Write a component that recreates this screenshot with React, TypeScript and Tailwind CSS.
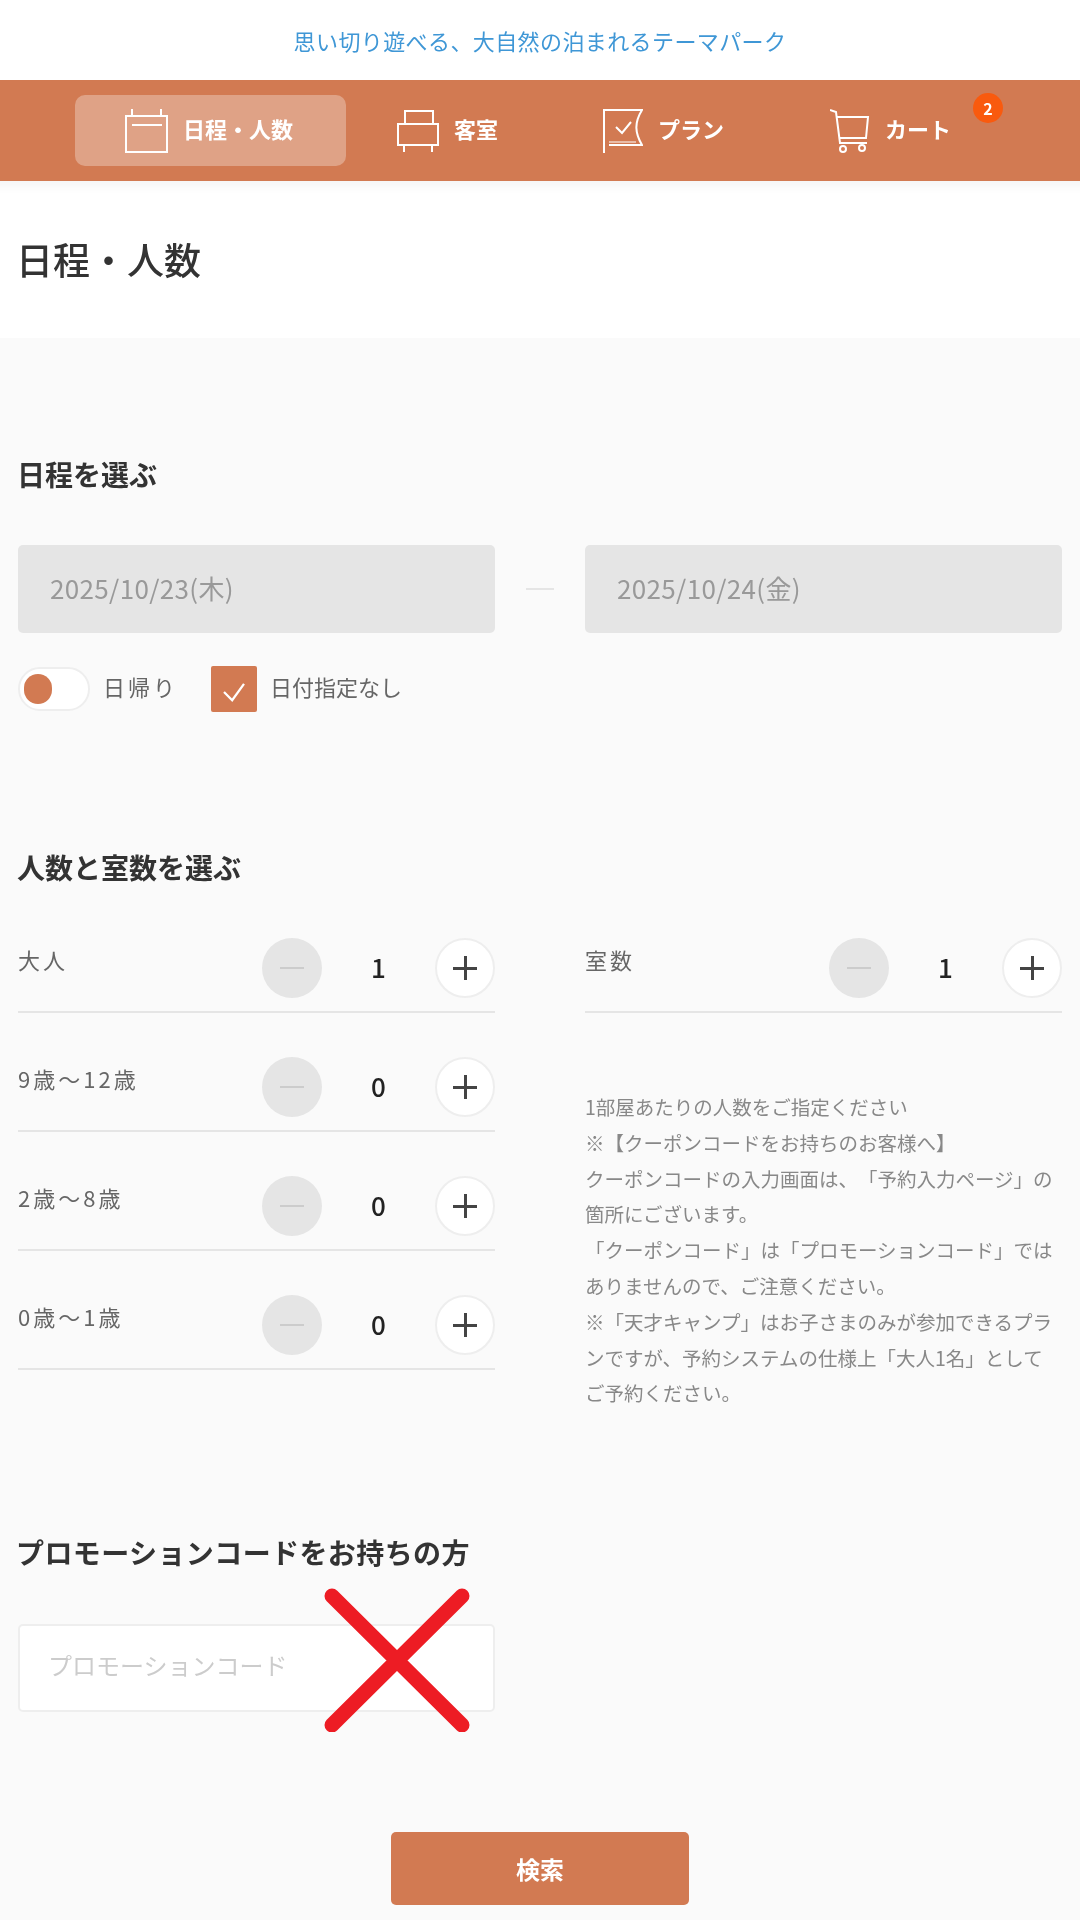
function CalendarIcon() {
  return (
    <svg width="43" height="44" viewBox="0 0 43 44" fill="none" stroke="#fff" strokeWidth="2">
      <rect x="1" y="7" width="41" height="36" />
      <path d="M7 0V7M36 0V7" />
      <path d="M7 16H37" />
    </svg>
  );
}
function BedIcon() {
  return (
    <svg width="42" height="44" viewBox="0 0 42 44" fill="none" stroke="#fff" strokeWidth="2">
      <path d="M8 15V2H36V15" />
      <rect x="1" y="15" width="40" height="21" />
      <path d="M7 36V43M35 36V43" />
    </svg>
  );
}
function PlanIcon() {
  return (
    <svg width="40" height="44" viewBox="0 0 40 44" fill="none" stroke="#fff" strokeWidth="2">
      <path d="M1 44V1H39C31 14 32 24 39 36H6" />
      <path d="M13 18L19 24L28 13" />
      <path d="M6 33H33" strokeWidth="1" />
    </svg>
  );
}
function CartIcon() {
  return (
    <svg width="40" height="44" viewBox="0 0 40 44" fill="none" stroke="#fff" strokeWidth="2">
      <path d="M0 1L6 3L10 34H37" />
      <path d="M7 8H38L36 29H9" />
      <circle cx="13" cy="40" r="3" />
      <circle cx="32" cy="39" r="3" />
    </svg>
  );
}

function NavItem({ icon, label, className }: { icon: React.ReactNode; label: string; className: string }) {
  return (
    <div className={`flex h-[71px] shrink-0 items-center gap-[15px] rounded-[10px] ${className}`}>
      {icon}
      <span className="-mt-[5px] text-[22px] font-bold whitespace-nowrap text-white">{label}</span>
    </div>
  );
}

function Stepper({ value }: { value: number }) {
  return (
    <div className="flex items-center">
      <div className="flex h-[60px] w-[60px] items-center justify-center rounded-full bg-[#e5e5e5]">
        <div className="h-[2px] w-6 bg-[#cccccc]" />
      </div>
      <div className="w-[113px] pb-[4px] text-center text-[26px] font-medium text-[#222222]">{value}</div>
      <div className="relative flex h-[60px] w-[60px] items-center justify-center rounded-full border-2 border-[#eeeeee] bg-white">
        <div className="h-[3px] w-6 bg-[#444444]" />
        <div className="absolute h-6 w-[3px] bg-[#444444]" />
      </div>
    </div>
  );
}

function Row({ label, value }: { label: string; value: number }) {
  return (
    <div className="flex h-[119px] items-end justify-between border-b-2 border-[#e5e5e5] pb-[13px]">
      <span className="mb-[24px] text-[22px] leading-[30px] tracking-[3px] text-[#666666]">{label}</span>
      <Stepper value={value} />
    </div>
  );
}

const NOTES = [
  "1部屋あたりの人数をご指定ください",
  "※【クーポンコードをお持ちのお客様へ】",
  "クーポンコードの入力画面は、「予約入力ページ」の箇所にございます。",
  "「クーポンコード」は「プロモーションコード」ではありませんので、ご注意ください。",
  "※「天才キャンプ」はお子さまのみが参加できるプランですが、予約システムの仕様上「大人1名」としてご予約ください。",
];

export default function App() {
  return (
    <div className="relative h-[1920px] w-[1080px] overflow-hidden bg-[#fafafa]">
      <div className="flex h-[1920px] w-[1080px] flex-col bg-[#fafafa] font-['Noto_Sans_CJK_JP','Noto_Sans',sans-serif] text-[#333333] blur-[0.6px] [text-spacing-trim:space-all]">
        <header className="flex h-[80px] shrink-0 items-center justify-center bg-white text-[22px] tracking-[0.4px] text-[#3f97d6]">
          思い切り遊べる、大自然の泊まれるテーマパーク
        </header>
        <nav className="flex h-[101px] shrink-0 items-center bg-[#d27a52] pl-[75px]">
          <NavItem className="w-[271px] bg-white/30 pl-[50px]" icon={<CalendarIcon />} label="日程・人数" />
          <NavItem className="ml-[51px]" icon={<BedIcon />} label="客室" />
          <NavItem className="ml-[105px]" icon={<PlanIcon />} label="プラン" />
          <NavItem className="ml-[106px]" icon={<CartIcon />} label="カート" />
          <span className="-mt-[46px] ml-[22px] flex h-[30px] w-[30px] shrink-0 items-center justify-center rounded-full bg-[#f95a0e] text-[16px] font-bold text-white">
            2
          </span>
        </nav>
        <div className="flex h-[157px] shrink-0 items-center bg-white pl-[16px] shadow-[inset_0_16px_10px_-10px_rgba(0,0,0,0.04)]">
          <h1 className="text-[37px] font-medium text-[#333333]">日程・人数</h1>
        </div>

        <main className="flex flex-col px-[18px]">
          <h2 className="mt-[116px] -ml-[1px] text-[28px] leading-[40px] font-bold">日程を選ぶ</h2>
          <div className="mt-[51px] flex items-center">
            <div className="flex h-[88px] w-[477px] items-center rounded-[5px] bg-[#e5e5e5] pb-[4px] pl-[32px] text-[26px] tracking-[0.35px] text-[#999999]">
              2025/10/23(木)
            </div>
            <div className="mx-[31px] h-[2px] w-[28px] bg-[#e5e5e5]" />
            <div className="flex h-[88px] w-[477px] items-center rounded-[5px] bg-[#e5e5e5] pb-[4px] pl-[32px] text-[26px] tracking-[0.35px] text-[#999999]">
              2025/10/24(金)
            </div>
          </div>
          <div className="mt-[33px] flex items-center">
            <div className="flex h-[44px] w-[72px] items-center rounded-full border-2 border-[#eeeeee] bg-white pl-[4px]">
              <div className="h-[30px] w-[28px] rounded-full bg-[#d27a52]" />
            </div>
            <span className="ml-[13px] pb-[6px] text-[22px] tracking-[3px] text-[#666666]">日帰り</span>
            <div className="ml-[33px] flex h-[46px] w-[46px] items-center justify-center rounded-[2px] bg-[#d27a52] pt-[6px]">
              <svg width="26" height="20" viewBox="0 0 26 22" fill="none" stroke="#fff" strokeWidth="2.5">
                <path d="M2 11L11 20L24 2" />
              </svg>
            </div>
            <span className="ml-[13px] pb-[6px] text-[22px] text-[#666666]">日付指定なし</span>
          </div>

          <h2 className="mt-[135px] -ml-[1px] text-[28px] leading-[40px] font-bold">人数と室数を選ぶ</h2>
          <div className="mt-[7px] flex gap-[90px]">
            <div className="w-[477px]">
              <Row label="大人" value={1} />
              <Row label="9歳〜12歳" value={0} />
              <Row label="2歳〜8歳" value={0} />
              <Row label="0歳〜1歳" value={0} />
            </div>
            <div className="w-[477px]">
              <Row label="室数" value={1} />
              <div className="mt-[76px] text-[19.5px] leading-[35.8px] text-[#888888]">
                {NOTES.map((n) => (
                  <p key={n}>{n}</p>
                ))}
              </div>
            </div>
          </div>

          <h2 className="mt-[121px] -ml-[2px] text-[28px] leading-[40px] font-bold tracking-[0.4px]">プロモーションコードをお持ちの方</h2>
          <div className="mt-[52px] flex h-[88px] w-[477px] items-center rounded-[5px] border-2 border-[#eeeeee] bg-white pb-[6px] pl-[28px] text-[24px] text-[#cccccc]">
            プロモーションコード
          </div>
          <button className="mx-auto mt-[120px] flex h-[73px] w-[298px] items-center justify-center rounded-[5px] bg-[#d27a52] text-[24px] font-bold text-white">
            検索
          </button>
        </main>
      </div>

      <svg className="absolute top-[1588px] left-[324px]" width="146" height="144" viewBox="0 0 146 144" fill="none" stroke="#ed1c24" strokeWidth="15" strokeLinecap="round">
        <path d="M8 8L138 137M138 8L8 137" />
      </svg>
    </div>
  );
}
